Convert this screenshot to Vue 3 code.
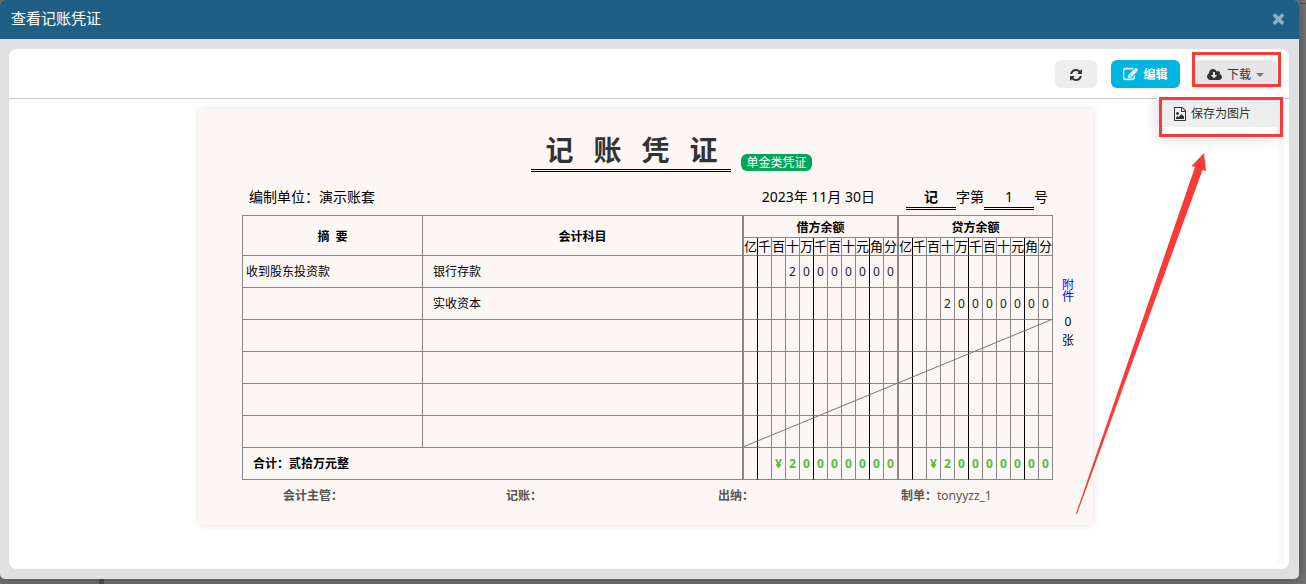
<script setup>
const digitNames = ['亿', '千', '百', '十', '万', '千', '百', '十', '元', '角', '分']
const titleChars = ['记', '账', '凭', '证']
const blank = ''

const toCells = (text) => text.padStart(digitNames.length, ' ').split('').map((c) => c.trim())

const entries = [
  { summary: '收到股东投资款', account: '银行存款', debit: '20000000', credit: blank },
  { summary: blank, account: '实收资本', debit: blank, credit: '20000000' },
  { summary: blank, account: blank, debit: blank, credit: blank },
  { summary: blank, account: blank, debit: blank, credit: blank },
  { summary: blank, account: blank, debit: blank, credit: blank },
  { summary: blank, account: blank, debit: blank, credit: blank }
]
const total = '¥20000000'

const cellClass = (index, side) => ({
  digit: true,
  strong: index === 0 || index === 4 || index === 8,
  edge: side === 'debit' && index === digitNames.length - 1
})
</script>

<template>
  <div class="page">
    <div class="dialog">
      <header class="dialog-head">
        <h1>查看记账凭证</h1>
        <button class="close" type="button" aria-label="关闭">
          <svg viewBox="0 0 1792 1792" width="17" height="17"><path d="M1490 1322q0 40-28 68l-136 136q-28 28-68 28t-68-28l-294-294-294 294q-28 28-68 28t-68-28l-136-136q-28-28-28-68t28-68l294-294-294-294q-28-28-28-68t28-68l136-136q28-28 68-28t68 28l294 294 294-294q28-28 68-28t68 28l136 136q28 28 28 68t-28 68l-294 294 294 294q28 28 28 68z" /></svg>
        </button>
      </header>

      <main class="panel">
        <div class="toolbar">
          <button class="btn refresh" type="button" aria-label="刷新">
            <svg viewBox="0 0 1792 1792" width="14" height="14"><path d="M1639 1056q0 5-1 7-64 268-268 434.5t-478 166.5q-146 0-282.5-55t-243.5-157l-129 129q-19 19-45 19t-45-19-19-45v-448q0-26 19-45t45-19h448q26 0 45 19t19 45-19 45l-137 137q71 66 161 102t187 36q134 0 250-65t186-179q11-17 53-117 8-23 30-23h192q13 0 22.5 9.5t9.5 22.5zm25-800v448q0 26-19 45t-45 19h-448q-26 0-45-19t-19-45 19-45l138-138q-148-137-349-137-134 0-250 65t-186 179q-11 17-53 117-8 23-30 23h-199q-13 0-22.5-9.5t-9.5-22.5v-7q65-268 270-434.5t480-166.5q146 0 284 55.5t245 156.5l130-129q19-19 45-19t45 19 19 45z" /></svg>
          </button>
          <button class="btn edit" type="button">
            <svg viewBox="0 0 1792 1792" width="15" height="15"><path d="M888 1184l116-116-152-152-116 116v56h96v96h56zm440-720q-16-16-33 1l-350 350q-17 17-1 33t33-1l350-350q17-17 1-33zm80 594v190q0 119-84.5 203.5t-203.5 84.5h-832q-119 0-203.5-84.5t-84.5-203.5v-832q0-119 84.5-203.5t203.5-84.5h832q63 0 117 25 15 7 18 23 3 17-9 29l-49 49q-14 14-32 8-23-6-45-6h-832q-66 0-113 47t-47 113v832q0 66 47 113t113 47h832q66 0 113-47t47-113v-126q0-13 9-22l64-64q15-15 35-7t20 29zm-96-738l288 288-672 672h-288v-288zm444 132l-92 92-288-288 92-92q28-28 68-28t68 28l152 152q28 28 28 68t-28 68z" /></svg>
            编辑
          </button>
          <div class="dropdown">
            <button class="btn download" type="button" aria-haspopup="true" aria-expanded="true">
              <svg viewBox="-64 0 1920 1792" width="15" height="14"><path d="M1216 928q0-14-9-23t-23-9h-224v-352q0-13-9.5-22.5t-22.5-9.5h-192q-13 0-22.5 9.5t-9.5 22.5v352h-224q-13 0-22.5 9.5t-9.5 22.5q0 14 9 23l352 352q9 9 23 9t23-9l351-351q10-12 10-24zm640 224q0 159-112.5 271.5t-271.5 112.5h-1088q-185 0-316.5-131.5t-131.5-316.5q0-130 70-240t188-165q-2-30-2-43 0-212 150-362t362-150q156 0 285.5 87t188.5 231q71-62 166-62 106 0 181 75t75 181q0 76-41 138 130 31 213.5 135.5t83.5 238.5z" /></svg>
              下载
              <span class="caret"></span>
            </button>
            <div class="menu">
              <button class="menu-item" type="button">
                <svg viewBox="0 0 1792 1792" width="14" height="14"><path d="M1596 380q28 28 48 76t20 88v1152q0 40-28 68t-68 28h-1344q-40 0-68-28t-28-68v-1600q0-40 28-68t68-28h896q40 0 88 20t76 48zm-444-244v376h376q-10-29-22-41l-313-313q-12-12-41-22zm384 1528v-1024h-416q-40 0-68-28t-28-68v-416h-768v1536h1280zm-128-448v320h-1024v-192l192-192 128 128 384-384zm-832-192q-80 0-136-56t-56-136 56-136 136-56 136 56 56 136-56 136-136 56z" /></svg>
                保存为图片
              </button>
            </div>
          </div>
        </div>

        <div class="content">
          <section class="paper">
            <div class="title-row">
              <h2><span v-for="c in titleChars" :key="c">{{ c }}</span></h2>
              <span class="badge">单金类凭证</span>
            </div>

            <div class="info-row">
              <span>编制单位：演示账套</span>
              <span class="date">2023年 11月 30日</span>
              <span class="number"><b class="slot">记</b>字第<span class="slot">1</span>号</span>
            </div>

            <div class="sheet">
              <table>
                <colgroup>
                  <col class="col-summary" />
                  <col />
                  <col v-for="n in 10" :key="'d' + n" class="col-digit" />
                  <col class="col-edge" />
                  <col v-for="n in 11" :key="'c' + n" class="col-digit" />
                </colgroup>
                <thead>
                  <tr class="head-top">
                    <th rowspan="2">摘&nbsp; 要</th>
                    <th rowspan="2" class="edge">会计科目</th>
                    <th colspan="11" class="edge">借方余额</th>
                    <th colspan="11">贷方余额</th>
                  </tr>
                  <tr class="head-digits">
                    <td v-for="(n, i) in digitNames" :key="'d' + i" :class="cellClass(i, 'debit')">{{ n }}</td>
                    <td v-for="(n, i) in digitNames" :key="'c' + i" :class="cellClass(i, 'credit')">{{ n }}</td>
                  </tr>
                </thead>
                <tbody>
                  <tr v-for="(row, r) in entries" :key="r">
                    <td class="summary">{{ row.summary }}</td>
                    <td class="account edge">{{ row.account }}</td>
                    <td v-for="(c, i) in toCells(row.debit)" :key="'d' + i" :class="cellClass(i, 'debit')">{{ c }}</td>
                    <td v-for="(c, i) in toCells(row.credit)" :key="'c' + i" :class="cellClass(i, 'credit')">{{ c }}</td>
                  </tr>
                </tbody>
                <tfoot>
                  <tr>
                    <th colspan="2" class="total edge">合计：贰拾万元整</th>
                    <td v-for="(c, i) in toCells(total)" :key="'d' + i" :class="cellClass(i, 'debit')">{{ c }}</td>
                    <td v-for="(c, i) in toCells(total)" :key="'c' + i" :class="cellClass(i, 'credit')">{{ c }}</td>
                  </tr>
                </tfoot>
              </table>
              <svg class="strike" viewBox="0 0 310 128" preserveAspectRatio="none"><line x1="0" y1="128" x2="310" y2="0" /></svg>
            </div>

            <aside class="attach">
              <a href="#">附件</a>
              <span>0</span>
              <span>张</span>
            </aside>

            <footer class="signers">
              <b>会计主管：</b>
              <b>记账：</b>
              <b>出纳：</b>
              <span><b>制单：</b>tonyyzz_1</span>
            </footer>
          </section>
          <div class="scroll-track"></div>
        </div>
      </main>
    </div>

    <svg class="marks" viewBox="0 0 306 584" width="306" height="584" aria-hidden="true">
      <rect x="193.500" y="53.500" width="86" height="32" />
      <rect x="160.500" y="98.500" width="121" height="37" />
      <path d="M204 153 L206 171 L202.500 170 L77 514 L76 513.500 L195 167 L191.500 166 Z" />
    </svg>
  </div>
</template>

<style>
body {
  background: #6c6c6c;
}
</style>

<style scoped>
* {
  box-sizing: border-box;
}
.page {
  position: relative;
  display: flex;
  min-height: 100vh;
  padding: 0 7px 5px 0;
  overflow: hidden;
  font-family: "Noto Sans", "Noto Sans CJK SC", sans-serif;
  font-size: 12px;
  line-height: 16px;
  color: #000;
  background:
    linear-gradient(90deg, transparent 99px, #505050 99px, #505050 104px, transparent 104px),
    linear-gradient(transparent 3px, #505050 3px, #505050 4px, transparent 4px),
    #747474;
}
button {
  font: inherit;
  border: 0;
  cursor: pointer;
}
svg {
  fill: currentColor;
}
.dialog {
  flex: 1;
  min-width: 0;
  display: flex;
  flex-direction: column;
  background: #dfe0e2;
  border-radius: 5px;
  box-shadow: 0 0 14px rgba(0, 0, 0, 0.4);
  overflow: hidden;
}
.dialog-head {
  display: flex;
  align-items: center;
  justify-content: space-between;
  height: 39px;
  padding: 0 12px 3px 11px;
  background: #1f5f85;
  color: #fff;
}
h1 {
  margin: 0;
  font-size: 15px;
  line-height: 20px;
  font-weight: 400;
}
.close {
  display: flex;
  padding: 0;
  color: #8fafc2;
  background: none;
}
.panel {
  flex: 1;
  display: flex;
  flex-direction: column;
  margin: 10px 10px 10px 9px;
  background: #fff;
  border-radius: 8px;
}
.toolbar {
  display: flex;
  justify-content: flex-end;
  align-items: center;
  height: 50px;
  padding: 0 12px 0 0;
  border-bottom: 1px solid #c8c8c8;
}
.btn {
  display: flex;
  align-items: center;
  justify-content: center;
  gap: 5px;
  height: 28px;
  padding: 2px 0 0;
  border-radius: 6px;
  color: #333;
}
.refresh {
  width: 42px;
  margin-right: 14px;
  background: #eee;
}
.edit {
  width: 69px;
  margin-right: 14px;
  color: #fff;
  font-weight: 700;
  background: #00b5e2;
}
.edit svg {
  stroke: currentColor;
  stroke-width: 50;
}
.download {
  width: 83px;
  background: #e6e6e6;
}
.caret {
  border: 4px solid transparent;
  border-top-color: #777;
  border-bottom: 0;
}
.dropdown {
  position: relative;
}
.menu {
  position: absolute;
  z-index: 2;
  top: 30px;
  right: 0;
  width: 120px;
  padding: 10px 0 8px;
  background: #fff;
  border-radius: 6px;
  box-shadow: 0 4px 14px rgba(0, 0, 0, 0.14);
}
.menu-item {
  display: flex;
  align-items: center;
  gap: 4px;
  width: 100%;
  height: 27px;
  padding: 2px 0 0 16px;
  color: #333;
  background: #eee;
}
.content {
  position: relative;
  flex: 1;
  display: flex;
  padding: 0 11px 5px 5px;
}
.scroll-track {
  position: absolute;
  top: 0;
  right: 5px;
  bottom: 5px;
  width: 6px;
  background: #f9f9f9;
  border-radius: 3px;
}
.paper {
  flex: 1;
  display: grid;
  grid-template-columns: 1fr 30px;
  grid-template-rows: auto auto auto 1fr;
  max-width: 894px;
  min-height: 416px;
  margin: 10px auto auto;
  padding: 0 10px 0 43px;
  background: #fcf7f4;
  box-shadow: 0 0 8px rgba(0, 0, 0, 0.12);
}
.title-row {
  grid-column: 1;
  display: flex;
  justify-content: center;
  align-items: flex-end;
  gap: 10px;
  height: 63px;
  padding-left: 48px;
}
h2 {
  display: flex;
  justify-content: center;
  gap: 20px;
  width: 200px;
  margin: 0;
  padding-bottom: 1px;
  border-bottom: 3px double #000;
  font-size: 28px;
  line-height: 36px;
  font-weight: 700;
  color: #333;
}
.badge {
  margin-bottom: 1px;
  padding: 0 5px;
  line-height: 17px;
  border-radius: 6px;
  color: #fff;
  background: #00a65a;
}
.info-row {
  grid-column: 1;
  display: flex;
  align-items: center;
  height: 43px;
  padding: 6px 5px 0 7px;
  font-size: 14px;
  line-height: 20px;
}
.date {
  margin-left: auto;
}
.number {
  display: flex;
  height: 20px;
  margin-left: 31px;
}
.slot {
  width: 50px;
  height: 23px;
  text-align: center;
  border-bottom: 3px double #000;
}
.sheet {
  grid-column: 1;
  position: relative;
}
table {
  width: 100%;
  table-layout: fixed;
  border-collapse: separate;
  border-spacing: 0;
  border: 1px solid #888;
  border-width: 1px 0 0 1px;
}
.col-summary {
  width: 180px;
}
.col-digit {
  width: 14px;
}
.col-edge {
  width: 15px;
}
th,
td {
  height: 32px;
  padding: 0;
  border: 0 solid #888;
  border-right-width: 1px;
  border-bottom-width: 1px;
  white-space: nowrap;
}
.head-top th {
  height: 22px;
  padding-top: 2px;
}
.head-digits td {
  height: 18px;
  font-size: 13px;
  line-height: 17px;
}
.digit {
  text-align: center;
}
tbody .digit {
  color: #222;
}
.strong {
  border-right-color: #000;
}
.edge {
  border-right-width: 2px;
}
.summary {
  padding-left: 3px;
}
.account {
  padding-left: 10px;
}
.total {
  padding-left: 10px;
  text-align: left;
}
tfoot .digit {
  font-weight: 700;
  color: #4fbf40;
}
.strike {
  position: absolute;
  right: 0;
  bottom: 33px;
  width: 310px;
  height: 128px;
  stroke: #777;
}
.attach {
  display: flex;
  flex-direction: column;
  align-items: center;
  padding-top: 64px;
}
.attach a {
  width: 12px;
  margin-bottom: 9px;
  line-height: 12px;
  color: #00f;
  text-decoration: none;
}
.attach span {
  line-height: 19px;
}
.signers {
  grid-column: 1;
  display: grid;
  grid-template-columns: 223fr 212fr 183fr 152fr;
  align-items: start;
  padding: 8px 0 0 41px;
  color: #555;
}
.marks {
  position: absolute;
  z-index: 3;
  top: 0;
  right: 0;
  pointer-events: none;
}
.marks rect {
  fill: none;
  stroke: #fb3a38;
  stroke-width: 3;
}
.marks path {
  fill: #fb3a38;
}
</style>
